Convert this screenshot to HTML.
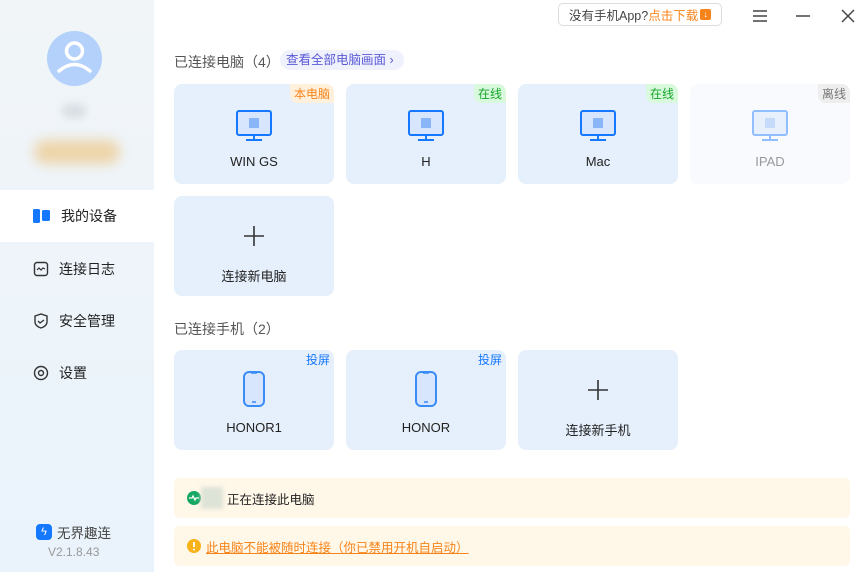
<!DOCTYPE html>
<html><head><meta charset="utf-8"><style>
*{margin:0;padding:0;box-sizing:border-box}
body{width:862px;height:572px;overflow:hidden;background:#fff;font-family:"Liberation Sans","Noto Sans CJK SC",sans-serif;position:relative;font-size:13px;color:#222}
.side{position:absolute;left:0;top:0;width:154px;height:572px;background:linear-gradient(#f1f5f8,#eaf3fc)}
.av{position:absolute;left:47px;top:31px;width:55px;height:55px;border-radius:50%;background:#b3d1fb}
.nav{position:absolute;left:0;width:154px;height:52px;display:flex;align-items:center;padding-left:33px;font-size:14px;color:#222}
.nav svg{margin-right:10px}
.card{position:absolute;width:160px;height:100px;border-radius:8px;background:#e6f0fc}
.card .nm{position:absolute;left:0;right:0;top:70px;text-align:center;font-size:13px;color:#222}
.tag{position:absolute;right:0;top:0;font-size:12px;padding:1px 4px;border-radius:0 8px 0 8px}
.ic{position:absolute;left:60px;top:24px}
.ban{position:absolute;left:174px;width:676px;height:40px;background:#fff7e8;border-radius:6px;display:flex;align-items:center;padding-left:13px;font-size:12.5px}
.h{position:absolute;left:174px;font-size:14px;color:#555}
</style></head><body>
<div class="side">
<div class="av"><svg width="55" height="55" viewBox="0 0 55 55"><circle cx="27.5" cy="20" r="8" fill="none" stroke="#fff" stroke-width="3.5"/><path d="M12 40q15.5-13 31 0" fill="none" stroke="#fff" stroke-width="3.5" stroke-linecap="round"/></svg></div>
<div style="position:absolute;left:62px;top:104px;width:24px;height:14px;background:#d8dee3;border-radius:7px;filter:blur(4px)"></div>
<div style="position:absolute;left:34px;top:140px;width:86px;height:24px;background:#edd4a8;border-radius:12px;filter:blur(6px)"></div>
<div class="nav" style="top:190px;background:#fff"><svg width="18" height="16"><rect x="0" y="1" width="7" height="14" rx="1.5" fill="#1677ff"/><rect x="9" y="2" width="8" height="11" rx="1.5" fill="#1677ff"/></svg>我的设备</div>
<div class="nav" style="top:243px"><svg width="16" height="16"><rect x="1.5" y="1.5" width="13" height="13" rx="2.5" fill="none" stroke="#333" stroke-width="1.4"/><path d="M4 9l2-2 2 2 2-2 2 1" fill="none" stroke="#333" stroke-width="1.2"/></svg>连接日志</div>
<div class="nav" style="top:295px"><svg width="16" height="16"><path d="M2 3l6-2 6 2v6q0 4-6 6q-6-2-6-6z" fill="none" stroke="#333" stroke-width="1.4"/><path d="M5 8l2 2 4-3" fill="none" stroke="#333" stroke-width="1.3"/></svg>安全管理</div>
<div class="nav" style="top:347px"><svg width="16" height="16"><circle cx="8" cy="8" r="6.5" fill="none" stroke="#333" stroke-width="1.4"/><circle cx="8" cy="8" r="2.5" fill="none" stroke="#333" stroke-width="1.4"/></svg>设置</div>
<div style="position:absolute;left:36px;top:522px;display:flex;align-items:center;font-size:13.5px;color:#444"><span style="width:16px;height:16px;background:#1677ff;border-radius:4px;margin-right:5px;color:#fff;font-size:11px;text-align:center;line-height:16px">ϟ</span>无界趣连</div>
<div style="position:absolute;left:48px;top:545px;font-size:12px;color:#999">V2.1.8.43</div>
</div>
<div style="position:absolute;left:558px;top:3px;width:164px;height:23px;border:1px solid #ddd;border-radius:5px;font-size:12.5px;color:#444;display:flex;align-items:center;padding-left:10px">没有手机App?<span style="color:#f7841a">点击下载</span><span style="width:11px;height:11px;background:#f7841a;border-radius:2px;margin-left:2px;color:#fff;font-size:9px;line-height:11px;text-align:center">↓</span></div>
<svg style="position:absolute;left:752px;top:9px" width="16" height="14"><path d="M1 2h14M1 7h14M1 12h14" stroke="#444" stroke-width="1.5"/></svg>
<svg style="position:absolute;left:796px;top:15px" width="14" height="2"><path d="M0 1h14" stroke="#444" stroke-width="1.5"/></svg>
<svg style="position:absolute;left:841px;top:9px" width="14" height="14"><path d="M1 1l12 12M13 1L1 13" stroke="#444" stroke-width="1.5"/></svg>
<div class="h" style="top:52px">已连接电脑（4）</div>
<div style="position:absolute;left:280px;top:50px;height:20px;padding:0 10px 0 6px;background:#eff1fd;border-radius:10px;font-size:12.5px;color:#5a5ad6;line-height:20px">查看全部电脑画面 ›</div>
<svg width="0" height="0" style="position:absolute"><defs>
<g id="pc"><rect x="1" y="1" width="34" height="24" rx="2" fill="#d7e6fd" stroke="#1677ff" stroke-width="2"/><rect x="13" y="8" width="10" height="10" fill="#8ab6f7"/><path d="M18 26v3M10 30h16" stroke="#1677ff" stroke-width="2"/></g>
<g id="ph"><rect x="2" y="2" width="20" height="34" rx="5" fill="#d7e6fd" stroke="#3a8cf7" stroke-width="2"/><path d="M9 3h6M10 32h4" stroke="#3a8cf7" stroke-width="1.5"/></g></defs></svg>
<div class="card" style="left:174px;top:84px"><span class="tag" style="background:#fff0dc;color:#f7841a">本电脑</span><svg class="ic" style="left:62px;top:26px" width="36" height="32"><use href="#pc"/></svg><div class="nm">WIN GS</div></div>
<div class="card" style="left:346px;top:84px"><span class="tag" style="background:#d8f9dc;color:#15a52a">在线</span><svg class="ic" style="left:62px;top:26px" width="36" height="32"><use href="#pc"/></svg><div class="nm">H</div></div>
<div class="card" style="left:518px;top:84px"><span class="tag" style="background:#d8f9dc;color:#15a52a">在线</span><svg class="ic" style="left:62px;top:26px" width="36" height="32"><use href="#pc"/></svg><div class="nm">Mac</div></div>
<div class="card" style="left:690px;top:84px;background:#f8fafe"><span class="tag" style="background:#eeeeee;color:#777">离线</span><svg class="ic" style="left:62px;top:26px;opacity:.45" width="36" height="32"><use href="#pc"/></svg><div class="nm" style="color:#999">IPAD</div></div>
<div class="card" style="left:174px;top:196px"><svg class="ic" style="left:70px;top:30px" width="20" height="20"><path d="M10 0v20M0 10h20" stroke="#333" stroke-width="1.6"/></svg><div class="nm">连接新电脑</div></div>
<div class="h" style="top:319px">已连接手机（2）</div>
<div class="card" style="left:174px;top:350px"><span class="tag" style="color:#1677ff">投屏</span><svg class="ic" style="left:68px;top:20px" width="24" height="38"><use href="#ph"/></svg><div class="nm">HONOR1</div></div>
<div class="card" style="left:346px;top:350px"><span class="tag" style="color:#1677ff">投屏</span><svg class="ic" style="left:68px;top:20px" width="24" height="38"><use href="#ph"/></svg><div class="nm">HONOR</div></div>
<div class="card" style="left:518px;top:350px"><svg class="ic" style="left:70px;top:30px" width="20" height="20"><path d="M10 0v20M0 10h20" stroke="#333" stroke-width="1.6"/></svg><div class="nm">连接新手机</div></div>
<div class="ban" style="top:478px"><svg width="14" height="14"><circle cx="7" cy="7" r="7" fill="#17a862"/><path d="M2 7h3l1-2 2 4 1-2h3" fill="none" stroke="#fff" stroke-width="1.3"/></svg><span style="width:22px;height:22px;background:#dde3d6;filter:blur(2px);margin:0 4px 0 0"></span>正在连接此电脑</div>
<div class="ban" style="top:526px"><svg width="14" height="14"><circle cx="7" cy="7" r="7" fill="#f7b21a"/><path d="M7 3v5" stroke="#fff" stroke-width="1.8"/><circle cx="7" cy="10.5" r="1" fill="#fff"/></svg><span style="margin-left:5px;color:#f7841a;text-decoration:underline">此电脑不能被随时连接（你已禁用开机自启动）</span></div>
</body></html>
